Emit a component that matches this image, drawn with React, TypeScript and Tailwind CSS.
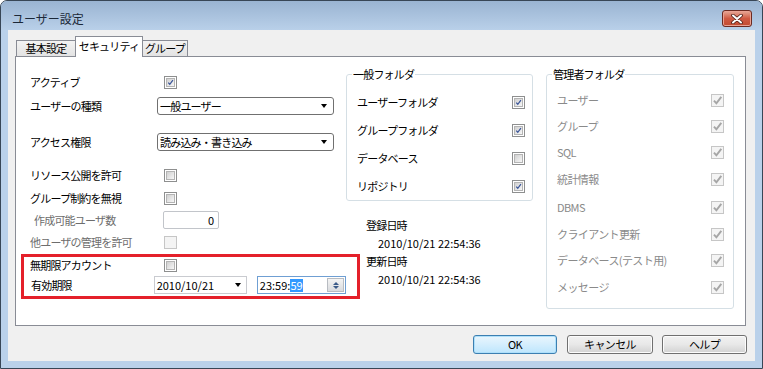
import React from 'react';

function Check({ checked = false, disabled = false }: { checked?: boolean; disabled?: boolean }) {
  return (
    <span
      className={
        disabled
          ? 'flex w-[13px] h-[13px] shrink-0 items-center justify-center border border-[#c6c6c6] bg-[#f7f7f7]'
          : 'flex w-[13px] h-[13px] shrink-0 items-center justify-center border border-[#8e8f8f] bg-white p-[1px]'
      }
    >
      <span
        className={
          disabled
            ? 'relative w-full h-full bg-[#f4f4f4]'
            : 'relative w-full h-full border border-[#b4b4b4] bg-linear-to-br from-[#d0d0d0] to-[#f7f7f7]'
        }
      >
        {checked && (
          <svg viewBox="0 0 9 9" className="absolute inset-0 w-full h-full">
            <path
              d="M1.6 4.6 L3.6 6.8 L7.6 1.6"
              fill="none"
              stroke={disabled ? '#a6a6a6' : '#3a5599'}
              strokeWidth="1.6"
            />
          </svg>
        )}
      </span>
    </span>
  );
}

function Arrow() {
  return <span className="ml-auto block w-0 h-0 border-x-[3.5px] border-x-transparent border-t-[4px] border-t-black" />;
}

function Select({ value }: { value: string }) {
  return (
    <div className="w-[177px] h-[18px] ml-[14px] flex items-center rounded-[3px] border border-[#707070] bg-white pl-[2px] pr-[6px]">
      <span className="text-[11px] leading-none tracking-[-0.8px] text-black">{value}</span>
      <Arrow />
    </div>
  );
}

const labelCls = 'w-[127px] pl-[14px] text-[11px] leading-none tracking-[-0.8px] text-black';
const grayLabelCls = 'w-[127px] text-[11px] leading-none tracking-[-0.8px] text-[#6d6d6d]';

function LeftColumn() {
  return (
    <div className="w-[330px] flex flex-col pt-[15px]">
      <div className="h-[20px] flex items-center">
        <span className={labelCls}>アクティブ</span>
        <span className="ml-[21px]">
          <Check checked />
        </span>
      </div>
      <div className="h-[18px] mt-[5px] flex items-center">
        <span className={labelCls}>ユーザーの種類</span>
        <Select value="一般ユーザー" />
      </div>
      <div className="h-[18px] mt-[18px] flex items-center">
        <span className={labelCls}>アクセス権限</span>
        <Select value="読み込み・書き込み" />
      </div>
      <div className="h-[20px] mt-[14px] flex items-center">
        <span className={labelCls}>リソース公開を許可</span>
        <span className="ml-[21px]">
          <Check />
        </span>
      </div>
      <div className="h-[20px] mt-[3px] flex items-center">
        <span className={labelCls}>グループ制約を無視</span>
        <span className="ml-[21px]">
          <Check />
        </span>
      </div>
      <div className="h-[20px] mt-[2px] flex items-center">
        <span className={grayLabelCls + ' pl-[18px]'}>作成可能ユーザ数</span>
        <div className="ml-[20px] w-[56px] h-[18px] rounded-[2px] border border-[#c2c5ca] bg-white flex items-center justify-end pr-[4px]">
          <span className="text-[11px] leading-none text-black">0</span>
        </div>
      </div>
      <div className="h-[20px] mt-[2px] flex items-center">
        <span className={grayLabelCls + ' pl-[14px]'}>他ユーザの管理を許可</span>
        <span className="ml-[21px]">
          <Check disabled />
        </span>
      </div>
      <div className="h-[20px] mt-[3px] flex items-center">
        <span className={labelCls}>無期限アカウント</span>
        <span className="ml-[21px]">
          <Check />
        </span>
      </div>
      <div className="h-[20px] flex items-center">
        <span className={labelCls + ' pl-[15px]'}>有効期限</span>
        <div className="ml-[13px] w-[95px] h-[18px] border border-[#c9cbd0] bg-white flex items-center pl-[2px] pr-[5px]">
          <span className="text-[11px] leading-none text-black">2010/10/21</span>
          <Arrow />
        </div>
        <div className="ml-[10px] w-[91px] h-[18px] border border-[#6f9fd3] bg-white flex items-center pl-[2px] pr-[1px]">
          <span className="text-[11px] leading-none text-black">23:59:</span>
          <span className="text-[11px] leading-[13px] text-white bg-[#3399ff]">59</span>
          <div className="ml-auto w-[17px] h-[14px] border border-[#b8bcc2] bg-linear-to-b from-[#f4f4f4] to-[#d9dbde] flex flex-col items-center justify-center gap-[1px]">
            <span className="w-0 h-0 border-x-[3px] border-x-transparent border-b-[3px] border-b-[#3a5a88]" />
            <span className="w-0 h-0 border-x-[3px] border-x-transparent border-t-[3px] border-t-[#3a5a88]" />
          </div>
        </div>
      </div>
    </div>
  );
}

const generalFolders: [string, boolean][] = [
  ['ユーザーフォルダ', true],
  ['グループフォルダ', true],
  ['データベース', false],
  ['リポジトリ', true],
];

const adminFolders: [string, string][] = [
  ['ユーザー', 'h-[25px]'],
  ['グループ', 'h-[26px]'],
  ['SQL', 'h-[26px]'],
  ['統計情報', 'h-[28px]'],
  ['DBMS', 'h-[28px]'],
  ['クライアント更新', 'h-[26px]'],
  ['データベース(テスト用)', 'h-[27px]'],
  ['メッセージ', 'h-[27px]'],
];

function MiddleColumn() {
  return (
    <div className="w-[187px] flex flex-col pt-[10px]">
      <fieldset className="border border-[#d5dfe5] rounded-[3px] h-[134px]">
        <legend className="ml-[5px] px-[1px] text-[11px] leading-[14px] tracking-[-0.8px] text-black">一般フォルダ</legend>
        <div className="pl-[10px] pr-[7px] pt-[7px]">
          {generalFolders.map(([name, checked]) => (
            <div key={name} className="h-[28px] flex items-center justify-between">
              <span className="text-[11px] leading-none tracking-[-0.8px] text-black">{name}</span>
              <Check checked={checked} />
            </div>
          ))}
        </div>
      </fieldset>
      <div className="mt-[15px] flex flex-col text-[11px] leading-[18px] text-black">
        <span className="pl-[20px] tracking-[-0.8px]">登録日時</span>
        <span className="pl-[32px]">2010/10/21 22:54:36</span>
        <span className="pl-[20px] tracking-[-0.8px]">更新日時</span>
        <span className="pl-[32px]">2010/10/21 22:54:36</span>
      </div>
    </div>
  );
}

function RightColumn() {
  return (
    <div className="ml-[13px] w-[188px] flex flex-col pt-[10px]">
      <fieldset className="border border-[#d5dfe5] rounded-[3px] h-[242px]">
        <legend className="ml-[5px] px-[1px] text-[11px] leading-[14px] tracking-[-0.8px] text-black">管理者フォルダ</legend>
        <div className="pl-[10px] pr-[9px] pt-[7px]">
          {adminFolders.map(([name, h]) => (
            <div key={name} className={h + ' flex items-center justify-between'}>
              <span className="text-[11px] leading-none tracking-[-0.6px] text-[#8a8a8a]">{name}</span>
              <Check checked disabled />
            </div>
          ))}
        </div>
      </fieldset>
    </div>
  );
}

function DialogButton({ label, focused, className }: { label: string; focused?: boolean; className: string }) {
  return (
    <button
      className={
        className +
        ' h-[19px] rounded-[3px] border text-[11px] leading-none text-black tracking-[-0.6px] flex items-center justify-center ' +
        (focused
          ? 'border-[#3c7fb1] bg-linear-to-b from-[#eaf6fd] to-[#bee6fd] shadow-[inset_0_0_0_1px_#aee0fb]'
          : 'border-[#707070] bg-linear-to-b from-[#f2f2f2] via-[#e8e8e8] to-[#d2d2d2] shadow-[inset_0_0_0_1px_#fcfcfc]')
      }
    >
      {label}
    </button>
  );
}

export default function App() {
  return (
    <div className="w-[763px] h-[369px] overflow-hidden rounded-t-[7px] border border-[#384656] bg-[#bad1ea] flex flex-col font-['Noto_Sans_CJK_JP','Noto_Sans',sans-serif]">
      <div className="h-[29px] shrink-0 flex items-start bg-linear-to-b from-[#9ab4d2] to-[#b9d0e9]">
        <span className="mt-[11px] ml-[11px] text-[12px] leading-[14px] text-[#1b2838]">ユーザー設定</span>
        <div className="ml-auto mr-[10px] mt-[9px] w-[30px] h-[17px] rounded-[3px] border border-[#6b2a22] bg-linear-to-b from-[#e6a999] via-[#cf5a43] to-[#c24a30] flex items-center justify-center shadow-[inset_0_0_0_1px_#e9a293]">
          <svg width="12" height="10" viewBox="0 0 12 10">
            <path d="M2 1.5 L10 8.5 M10 1.5 L2 8.5" stroke="#4a1d17" strokeWidth="3.6" strokeLinecap="round" />
            <path d="M2 1.5 L10 8.5 M10 1.5 L2 8.5" stroke="#ffffff" strokeWidth="2" strokeLinecap="round" />
          </svg>
        </div>
      </div>
      <div className="flex-1 mx-[7px] mb-[7px] bg-[#f0f0f0] flex flex-col">
        <div className="mt-[6px] pl-[8px] h-[21px] flex items-end relative z-10">
          <div className="w-[60px] h-[17px] border border-[#898c95] bg-linear-to-b from-[#f3f3f3] to-[#e3e3e3] flex items-center justify-center">
            <span className="text-[11px] leading-none tracking-[-0.8px] text-black">基本設定</span>
          </div>
          <div className="-ml-[1px] w-[68px] h-[21px] border border-b-0 border-[#898c95] bg-white flex items-center justify-center pb-[2px]">
            <span className="text-[11px] leading-none tracking-[-0.8px] text-black">セキュリティ</span>
          </div>
          <div className="-ml-[1px] w-[46px] h-[17px] border border-[#898c95] bg-linear-to-b from-[#f3f3f3] to-[#e3e3e3] flex items-center justify-center">
            <span className="text-[11px] leading-none tracking-[-0.8px] text-black">グループ</span>
          </div>
        </div>
        <div className="-mt-[1px] ml-[7px] w-[731px] h-[270px] shrink-0 border border-[#898c95] bg-white flex relative">
          <LeftColumn />
          <MiddleColumn />
          <RightColumn />
          <div className="absolute left-[5px] top-[197px] w-[339px] h-[45px] border-[3px] border-[#e4202a]" />
        </div>
        <div className="mt-[9px] flex">
          <DialogButton label="OK" focused className="ml-[465px] w-[84px]" />
          <DialogButton label="キャンセル" className="ml-[10px] w-[86px]" />
          <DialogButton label="ヘルプ" className="ml-[9px] w-[85px]" />
        </div>
      </div>
    </div>
  );
}
